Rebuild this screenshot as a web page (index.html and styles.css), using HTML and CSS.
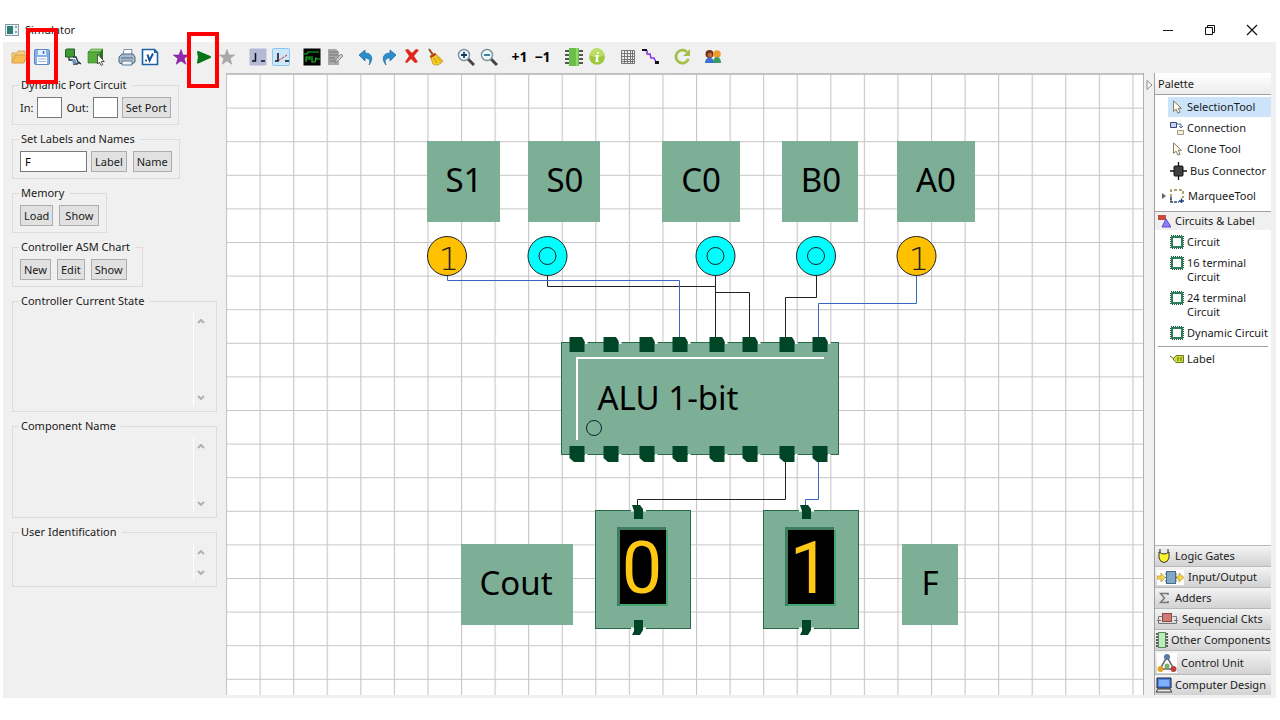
FILE: index.html
```html
<!DOCTYPE html>
<html lang="en">
<head>
<meta charset="utf-8">
<title>Simulator</title>
<link rel="stylesheet" href="styles.css">
</head>
<body>
<header class="titlebar">
  <svg class="app-icon" width="14" height="12" viewBox="0 0 14 12"><rect x=".5" y=".5" width="13" height="11" fill="#e8f4f8" stroke="#8a9aa5"/><rect x="2" y="2" width="6" height="8" fill="#2e7d78"/><path d="M10 3h2M10 8h2" stroke="#456"/></svg>
  <h1 class="title">Simulator</h1>
  <div class="window-controls">
    <button aria-label="Minimize"><svg width="12" height="12"><path d="M1 6.500h10" stroke="#111"/></svg></button>
    <button aria-label="Restore"><svg width="12" height="12" fill="none" stroke="#111"><path d="M1.500 3.500h7v7h-7zM3.500 3.500v-2h7v7h-2"/></svg></button>
    <button aria-label="Close"><svg width="12" height="12"><path d="M1 1l10 10M11 1L1 11" stroke="#111" stroke-width="1.200"/></svg></button>
  </div>
</header>

<div class="app">
  <div class="toolbar" role="toolbar" aria-label="Main">
    <div class="group">
      <button aria-label="Open"><svg viewBox="0 0 18 18"><path d="M2 15V5h5l1-2h7v3" fill="#f1cf85" stroke="#d9aa55"/><path d="M2 15l3-8h12l-3 8z" fill="#f4bd55" stroke="#dca040"/></svg></button>
      <button aria-label="Save"><svg viewBox="0 0 18 18"><rect x="1.500" y="1.500" width="15" height="15" rx="1.500" fill="#86b0e6" stroke="#5c88c6"/><rect x="5" y="2" width="8" height="5" fill="#e8f1fb"/><path d="M10.500 3v3" stroke="#3f6fb5" stroke-width="1.500"/><rect x="4" y="9" width="10" height="7" fill="#fff"/><path d="M5 11h8M5 13.500h8" stroke="#9db9dd"/></svg></button>
    </div>
    <div class="group">
      <button aria-label="Simulate circuit"><svg viewBox="0 0 18 18"><path d="M1.500 2l1-1h8v7l-1 1h-8z" fill="#3f9a34" stroke="#20601c"/><path d="M5 9v3h4M9 9h3l2 5 3 2M9 16h4l3-2" fill="none" stroke="#234" stroke-width="1.300"/><path d="M8 12l3-1 2 4-4 1z" fill="#6c93bd"/></svg></button>
      <button aria-label="Select component"><svg viewBox="0 0 18 18"><path d="M1 4l3-3h12l-3 3z" fill="#91d176" stroke="#3d8a2a" stroke-width=".6"/><path d="M1 4h12v11H1z" fill="#57ac3b" stroke="#2f7a1f" stroke-width=".6"/><path d="M13 4l3-3v11l-3 3z" fill="#2d7420"/><path d="M10.500 6v10l2-2 1.500 3.500 1.800-.8-1.500-3.200h3z" fill="#fff" stroke="#333" stroke-width=".8"/></svg></button>
    </div>
    <div class="group">
      <button aria-label="Print"><svg viewBox="0 0 18 18"><path d="M5 7l1-5.500h8L13.500 7z" fill="#fff" stroke="#7890a8"/><path d="M1 9l3-3h11l2 3v5l-2 1.500H2L1 14z" fill="#a9bbcd" stroke="#4d6781"/><path d="M4 13h10v4H4z" fill="#eef4fa" stroke="#5f7890"/><path d="M3 10h12" stroke="#506a84"/></svg></button>
      <button aria-label="Verilog"><svg viewBox="0 0 18 18"><path d="M1.500 1.500h12l3 3v12h-15z" fill="#fff" stroke="#1962a8" stroke-width="1.600"/><path d="M13 1l4 4h-4z" fill="#1962a8"/><path d="M6.500 6.500l2 6 3.500-7" fill="none" stroke="#10509a" stroke-width="2"/><circle cx="5" cy="12.500" r="1.100" fill="#10509a"/></svg></button>
    </div>
    <div class="group">
      <button aria-label="New wizard"><svg viewBox="0 0 18 18"><path d="M9 1.500l2 5.500h5.700l-4.500 3.600 1.600 5.700L9 13l-4.800 3.300 1.600-5.700L1.300 7H7z" fill="#9226ad" stroke="#6d1688" stroke-width=".5"/></svg></button>
      <button aria-label="Run"><svg viewBox="0 0 18 18"><path d="M3 4l12 5-12 5.500 1-5.500z" fill="#087514" stroke="#087514" stroke-width="2" stroke-linejoin="round"/></svg></button>
      <button aria-label="Stop"><svg viewBox="0 0 18 18"><path d="M9 1.500l2 5.500h5.700l-4.500 3.600 1.600 5.700L9 13l-4.800 3.300 1.600-5.700L1.300 7H7z" fill="#a9a9a9" stroke="#999" stroke-width=".5"/></svg></button>
    </div>
    <div class="group">
      <button aria-label="Straight wire"><svg viewBox="0 0 18 18"><rect x=".5" y=".5" width="17" height="17" rx="1" fill="#b6b9d6"/><path d="M6.500 5v8H3M12 13h4" fill="none" stroke="#111" stroke-width="1.500"/></svg></button>
      <button aria-label="Broken wire"><svg viewBox="0 0 18 18"><rect x=".5" y=".5" width="17" height="17" rx="1" fill="#cbe8fb" stroke="#8cc7ef"/><path d="M6 5v8H3M13 13h4" fill="none" stroke="#111" stroke-width="1.500"/><path d="M6 13l9-6" stroke="#d32222" stroke-dasharray="3 1"/></svg></button>
    </div>
    <div class="group">
      <button aria-label="Waveform"><svg viewBox="0 0 18 18"><path d="M.5.500h17v17H.5z" fill="#000"/><path d="M1 6h3l1-2h11M3 14V9h4v2H3M9 8v6h3l1-4 1 1h3" fill="none" stroke="#14bd28" stroke-width="1.200"/></svg></button>
      <button aria-label="Edit"><svg viewBox="0 0 18 18"><path d="M2 1h8l3 3v13H2z" fill="#a8a8a8"/><path d="M3 4h9M3 7h9M3 10h6M3 13h6" stroke="#777"/><path d="M9 15l1-4 5-5 2 2-5 5z" fill="#ccc" stroke="#888"/></svg></button>
    </div>
    <div class="group">
      <button aria-label="Undo"><svg viewBox="0 0 18 18"><path d="M2 7l6-5v3c7 0 9 6 4 12 2-5 0-7-4-7v3z" fill="#2a8dcc" stroke="#1b689e" stroke-width=".7"/></svg></button>
      <button aria-label="Redo"><svg viewBox="0 0 18 18"><path d="M16 7l-6-5v3C3 5 1 11 6 17c-2-5 0-7 4-7v3z" fill="#2a8dcc" stroke="#1b689e" stroke-width=".7"/></svg></button>
      <button aria-label="Delete"><svg viewBox="0 0 18 18"><path d="M2 2l3-1 4 4 4-4 3 1-5 6 4 6-3 1-4-4-4 4-2-1 4-6z" fill="#e12620"/></svg></button>
      <button aria-label="Clear"><svg viewBox="0 0 18 18"><path d="M3 1l4 6" stroke="#8e4b1a" stroke-width="2"/><path d="M4 8l5-3 3 3 5 5c-3 4-7 5-10 3z" fill="#f3cb28" stroke="#b98b18" stroke-width=".7"/><path d="M4 8l5-3 1 2-5 3z" fill="#b63a1f"/><path d="M8 10l3 5M11 9l4 5" stroke="#c99b17"/></svg></button>
    </div>
    <div class="group">
      <button aria-label="Zoom in"><svg viewBox="0 0 18 18"><path d="M11 11l6 6" stroke="#444" stroke-width="3"/><circle cx="7" cy="7" r="5.500" fill="#edf8fa" stroke="#78909b" stroke-width="1.400"/><path d="M4 7h6M7 4v6" stroke="#173f5a" stroke-width="1.800"/></svg></button>
      <button aria-label="Zoom out"><svg viewBox="0 0 18 18"><path d="M11 11l6 6" stroke="#444" stroke-width="3"/><circle cx="7" cy="7" r="5.500" fill="#edf8fa" stroke="#78909b" stroke-width="1.400"/><path d="M4 7h6" stroke="#27768f" stroke-width="1.800"/></svg></button>
    </div>
    <div class="group">
      <button class="step">+1</button>
      <button class="step">−1</button>
    </div>
    <div class="group">
      <button aria-label="Chip"><svg viewBox="0 0 18 18"><path d="M0 3h18M0 7h18M0 11h18M0 15h18" stroke="#222" stroke-width="1.300"/><rect x="4" y="0" width="10" height="18" fill="#6bc04a"/><path d="M11 0h2v18h-2z" fill="#8cd86a"/></svg></button>
      <button aria-label="Information"><svg viewBox="0 0 18 18"><circle cx="9" cy="9" r="7.800" fill="#9bc93b"/><path d="M2 7a7 7 0 0 1 14 0c-4 3-10 3-14 0z" fill="#bade67"/><path d="M10 4v1.500M7.500 8H9.500l-1 5h2" fill="none" stroke="#fff" stroke-width="2"/></svg></button>
    </div>
    <div class="group">
      <button aria-label="Grid"><svg viewBox="0 0 18 18"><path d="M2.500 2.500h13v13h-13zM5.500 2v14M8.500 2v14M11.500 2v14M13.500 2v14M2 5.500h14M2 8.500h14M2 11.500h14M2 13.500h14" fill="none" stroke="#777"/></svg></button>
      <button aria-label="Connect"><svg viewBox="0 0 18 18"><path d="M3 2l2 1v3h3l1 4h3l2 4" fill="none" stroke="#8030e8" stroke-width="1.500"/><path d="M0 1h5v2H0zM13 13h4v3h-4z" fill="#151020"/></svg></button>
    </div>
    <div class="group"><button aria-label="Refresh"><svg viewBox="0 0 18 18"><path d="M14 4a6.500 6.500 0 1 0 1.500 7" fill="none" stroke="#a3bf4b" stroke-width="2.800"/><path d="M17 1v7h-7z" fill="#a3bf4b"/></svg></button></div>
    <div class="group"><button aria-label="Users"><svg viewBox="0 0 18 18"><circle cx="5.500" cy="6" r="4" fill="#71331d"/><circle cx="6" cy="7" r="2.300" fill="#c76936"/><circle cx="13" cy="6" r="3.800" fill="#ed9b31"/><path d="M9 15c0-8 8-8 8 0z" fill="#3a9b60"/><path d="M1 15c0-7 9-7 9 0z" fill="#3973cf"/></svg></button></div>
  </div>

  <main class="workspace">
    <aside class="side">
      <fieldset><legend>Dynamic Port Circuit</legend>
        <div class="row">
          <label for="in">In:</label><input id="in" class="port" type="text">
          <label for="out">Out:</label><input id="out" class="port" type="text">
          <button>Set Port</button>
        </div>
      </fieldset>
      <fieldset><legend>Set Labels and Names</legend>
        <div class="row"><input class="name" type="text" value="F" aria-label="Label or name"><button>Label</button><button>Name</button></div>
      </fieldset>
      <fieldset><legend>Memory</legend>
        <div class="row"><button>Load</button><button class="show">Show</button></div>
      </fieldset>
      <fieldset><legend>Controller ASM Chart</legend>
        <div class="row"><button>New</button><button>Edit</button><button>Show</button></div>
      </fieldset>
      <fieldset class="pane"><legend>Controller Current State</legend>
        <div class="scroll state"><svg width="8" height="5"><path d="M1 4l3-3 3 3"/></svg><svg width="8" height="5"><path d="M1 1l3 3 3-3"/></svg></div>
      </fieldset>
      <fieldset class="pane"><legend>Component Name</legend>
        <div class="scroll component"><svg width="8" height="5"><path d="M1 4l3-3 3 3"/></svg><svg width="8" height="5"><path d="M1 1l3 3 3-3"/></svg></div>
      </fieldset>
      <fieldset class="pane"><legend>User Identification</legend>
        <div class="scroll user"><svg width="8" height="5"><path d="M1 4l3-3 3 3"/></svg><svg width="8" height="5"><path d="M1 1l3 3 3-3"/></svg></div>
      </fieldset>
    </aside>

    <div class="canvas">
      <svg class="scene" width="100%" height="100%">
        <defs>
          <pattern id="grid" width="33.570" height="33.600" patternUnits="userSpaceOnUse"><path d="M.5 0V34M0 .5H34" stroke="#c6c6c6" stroke-width="1.200"/></pattern>
          <g id="pin-top"><path d="M8 5h2.500v2H8z" fill="#fff"/><path d="M-7.500 0H5L7.500 4V15h-15z" fill="#004526"/></g>
          <g id="pin-bottom"><path d="M8 8h2.500v2H8z" fill="#fff"/><path d="M-7.500 0h15v16H-3l-4.500-4z" fill="#004526"/></g>
          <g id="display">
            <rect x=".5" y="5.500" width="95" height="118" fill="#7dae96" stroke="#276b4b"/>
            <path d="M36 4.500h15v2H36zM36 122.500h15v2H36z" fill="#fff"/>
            <path d="M37 0h8l3 4v10h-9V6zM39 115h9v10l-3 5h-8l2-4z" fill="#004526"/>
            <path d="M22 22h49v79H22z" fill="#3f7d60"/><path d="M25 25h48v76H25z" fill="#45a873"/><path d="M25 25h46v74H25z"/>
          </g>
        </defs>
        <rect width="100%" height="100%" fill="#fff"/>
        <rect width="100%" height="100%" fill="url(#grid)"/>
        <g transform="translate(-226 -74)">
          <g fill="#7dae96">
            <rect x="427" y="141" width="73" height="81"/><rect x="528" y="141" width="72" height="81"/>
            <rect x="662" y="141" width="78" height="81"/><rect x="782" y="141" width="76" height="81"/>
            <rect x="897" y="141" width="78" height="81"/><rect x="461" y="544" width="112" height="81"/>
            <rect x="902" y="544" width="56" height="81"/>
          </g>
          <g fill="none" stroke="#222">
            <path d="M547.500 275v11.500h168M715.500 275v63M715.500 292.500h34v46M816.500 275v22.500h-31v41M785.500 461v38.500h-148v8"/>
            <path d="M447.500 275v5.500h232v58M916.500 275v28.500h-98v35M818.500 461v38.500h-13v8" stroke="#3568c0"/>
          </g>
          <g stroke="#222">
            <circle cx="447" cy="256" r="19.500" fill="#ffc000"/><circle cx="916.500" cy="256" r="19.500" fill="#ffc000"/>
            <g fill="#0ff"><circle cx="547.500" cy="256" r="19.500"/><circle cx="547.500" cy="256" r="8.500"/><circle cx="715.500" cy="256" r="19.500"/><circle cx="715.500" cy="256" r="8.500"/><circle cx="816" cy="256" r="19.500"/><circle cx="816" cy="256" r="8.500"/></g>
          </g>
          <g class="bit"><text x="449" y="270">1</text><text x="919" y="270">1</text></g>
          <rect x="561.500" y="342.500" width="277" height="112" fill="#7dae96" stroke="#276b4b"/>
          <path d="M577 440V358H824" fill="none" stroke="#fff" stroke-width="2"/>
          <circle cx="594" cy="428" r="7.500" fill="none" stroke="#123"/>
          <use href="#pin-top" x="577" y="337"/><use href="#pin-top" x="611" y="337"/><use href="#pin-top" x="647" y="337"/><use href="#pin-top" x="680" y="337"/><use href="#pin-top" x="717" y="337"/><use href="#pin-top" x="750" y="337"/><use href="#pin-top" x="787" y="337"/><use href="#pin-top" x="820" y="337"/>
          <use href="#pin-bottom" x="577" y="446"/><use href="#pin-bottom" x="611" y="446"/><use href="#pin-bottom" x="647" y="446"/><use href="#pin-bottom" x="680" y="446"/><use href="#pin-bottom" x="717" y="446"/><use href="#pin-bottom" x="750" y="446"/><use href="#pin-bottom" x="787" y="446"/><use href="#pin-bottom" x="820" y="446"/>
          <use href="#display" x="595" y="505"/><use href="#display" x="763" y="505"/>
          <g class="tag">
            <text x="464" y="192">S1</text><text x="565" y="192">S0</text><text x="701" y="192">C0</text><text x="821" y="192">B0</text><text x="936" y="192">A0</text>
            <text x="516" y="595">Cout</text><text x="930" y="595">F</text><text x="668" y="410">ALU 1-bit</text>
          </g>
          <g class="digit"><text x="642" y="593">0</text><text x="810" y="593">1</text></g>
        </g>
      </svg>
    </div>

    <button class="flyout" aria-label="Collapse palette"><svg width="7" height="10"><path d="M1 .5l5 4.500-5 4.500z" fill="#fff" stroke="#888"/></svg></button>

    <aside class="palette">
      <svg width="0" height="0" class="defs"><defs>
        <symbol id="arrow" viewBox="0 0 12 16"><path d="M2 1v12l3-2.500 2 4.500 2.500-1-2-4.500h3.500z" fill="#fffbe6" stroke="#6e6a5c"/></symbol>
        <symbol id="board" viewBox="0 0 14 14"><rect x="1" y="1" width="12" height="12" fill="none" stroke="#1d5b40" stroke-width="2" stroke-dasharray="1 1"/><rect x="2" y="2" width="10" height="10" fill="#fff" stroke="#2d7d5b" stroke-width="2"/></symbol>
      </defs></svg>
      <h2 class="head">Palette</h2>
      <div class="tools">
        <button class="tool selected"><svg><use href="#arrow"/></svg>SelectionTool</button>
        <button class="tool"><svg viewBox="0 0 14 14"><path d="M.5 1.500h6v5h-6z" fill="#c7d3ef" stroke="#34467f"/><path d="M7 3h4v4M9 5l2 2 2-2" fill="none" stroke="#536fa0"/><path d="M7.500 9.500h6v4h-6z" fill="#f3efd9" stroke="#a09d88"/></svg>Connection</button>
        <button class="tool"><svg><use href="#arrow"/></svg>Clone Tool</button>
        <button class="tool wide"><svg viewBox="0 0 17 18"><path d="M8.500 0v18M0 9h17" stroke="#111" stroke-width="1.300"/><rect x="4" y="4" width="9" height="10" rx="1" fill="#3f3f3f" stroke="#111"/></svg>Bus Connector</button>
        <button class="tool marquee"><svg class="tri" viewBox="0 0 4 6"><path d="M0 0l4 3-4 3z" fill="#666"/></svg><svg viewBox="0 0 14 14"><path d="M1 13V1h12v8" fill="none" stroke="#9b8446" stroke-width="1.500" stroke-dasharray="3 2"/><path d="M1 8v5h8" fill="none" stroke="#2c4270" stroke-width="1.500" stroke-dasharray="3 1"/><path d="M9 12h5M11.500 9.500v5" stroke="#1d3b84" stroke-width="1.500"/></svg>MarqueeTool</button>
      </div>
      <h3 class="drawer open"><svg width="13" height="13"><path d="M0 0h8v5H0z" fill="#c94a3c"/><path d="M8 4l5 8H4z" fill="#8b80f5" stroke="#5a4bd0"/></svg>Circuits &amp; Label</h3>
      <div class="items">
        <button class="tool"><svg><use href="#board"/></svg>Circuit</button>
        <button class="tool two"><svg><use href="#board"/></svg><span>16 terminal<br>Circuit</span></button>
        <button class="tool two"><svg><use href="#board"/></svg><span>24 terminal<br>Circuit</span></button>
        <button class="tool"><svg><use href="#board"/></svg>Dynamic Circuit</button>
        <hr>
        <button class="tool"><svg viewBox="0 0 14 14"><path d="M0 4l4 3" stroke="#555"/><path d="M3 7l3-3.500h7.500v7H6z" fill="#cfe03c" stroke="#6b7420"/><path d="M7 6h5M7 8h5" stroke="#55611b" stroke-dasharray="2 1"/></svg>Label</button>
      </div>
      <div class="drawers">
        <button class="drawer"><svg width="14" height="14"><path d="M3 0v4M11 0v4" stroke="#222"/><path d="M2 3q5 4 10 0v6q-1 4-5 4.500Q3 13 2 9z" fill="#fbf32a" stroke="#333"/></svg>Logic Gates</button>
        <button class="drawer"><svg width="27" height="15"><path d="M0 0h27v15H0z" fill="#fff"/><path d="M0 6h4V3l4 4.500L4 12V9H0zM19 6h3V3l5 4.500-5 4.500V9h-3z" fill="#f7d64a" stroke="#a8842a" stroke-width=".6"/><rect x="9.500" y="1.500" width="9" height="12" fill="#7fa9c4" stroke="#446a85"/><path d="M8 4h2M8 7.500h2M8 11h2M18 4h2M18 7.500h2M18 11h2" stroke="#446a85"/></svg>Input/Output</button>
        <button class="drawer"><svg width="14" height="14"><path d="M11 4V2.500H3.500L7.500 7l-4 4.500H11V10" fill="none" stroke="#777" stroke-width="1.500"/></svg>Adders</button>
        <button class="drawer"><svg width="21" height="14"><path d="M5 4.500H1.500v7h18v-7h-4M0 8.500h4M17 8.500h4" fill="none" stroke="#777"/><rect x="5.500" y="1.500" width="9" height="8" fill="#cf7b75" stroke="#8e4743"/></svg>Sequencial Ckts</button>
        <button class="drawer other"><svg width="12" height="16"><path d="M0 2h12M0 5h12M0 8h12M0 11h12M0 14h12" stroke="#333" stroke-width="1.500"/><rect x="2.500" y=".5" width="7" height="15" fill="#bdebc0" stroke="#568c59"/></svg>Other Components</button>
        <button class="drawer tall"><svg width="20" height="20"><path d="M0 0h20v20H0z" fill="#fff"/><path d="M10 4L3 16h14z" fill="none" stroke="#666" stroke-width="1.500"/><circle cx="10" cy="4" r="3" fill="#5a7ba2"/><circle cx="3.500" cy="16" r="3" fill="#e2a22a"/><circle cx="16.500" cy="16" r="3" fill="#b94343"/><circle cx="10" cy="13" r="2.500" fill="#75b468"/></svg>Control Unit</button>
        <button class="drawer other"><svg width="16" height="16"><path d="M1 1h14v10H1z" fill="#4f82e8" stroke="#222"/><path d="M3 3h10v6H3z" fill="#7db0ff"/><path d="M2 12h12l2 3H0z" fill="#eee" stroke="#333"/></svg>Computer Design</button>
      </div>
    </aside>
  </main>
</div>

<div class="highlight save" aria-hidden="true"></div>
<div class="highlight run" aria-hidden="true"></div>
</body>
</html>
```
FILE: styles.css
```css
* { box-sizing: border-box; }
body {
  margin: 0;
  padding: 20px 4px 22px 3px;
  height: 100vh;
  display: flex;
  flex-direction: column;
  background: #fff;
  color: #1a1a1a;
  font: 11px/14px "Noto Sans", "Open Sans", sans-serif;
}
button {
  font: inherit;
  color: inherit;
  border: 0;
  padding: 0;
  background: none;
  display: flex;
  align-items: center;
  justify-content: center;
  white-space: nowrap;
}
h1, h2, h3 { margin: 0; font: inherit; }

.titlebar { height: 22px; display: flex; align-items: center; padding: 0 3px 2px 2px; gap: 6px; }
.title { flex: 1; }
.window-controls { display: flex; }
.window-controls button { width: 42px; height: 20px; }

.app { flex: 1; min-height: 0; display: flex; flex-direction: column; background: #f0f0f0; }
.toolbar { height: 31px; display: flex; align-items: center; gap: 8px; padding: 0 0 1px 4px; }
.group { display: flex; }
.group button { width: 23px; height: 22px; }
.group svg { width: 18px; height: 18px; }
.group .step { font-size: 14px; font-weight: 700; color: #000; }

.workspace { flex: 1; min-height: 0; display: flex; padding: 0 5px 3px 0; }

.side {
  width: 223px;
  padding: 4px 9px;
  display: flex;
  flex-direction: column;
  align-items: flex-start;
  gap: 6px;
}
fieldset {
  margin: 0;
  min-width: 0;
  height: 48px;
  padding: 4px 7px 6px;
  border: 1px solid #dcdcdc;
}
legend { padding: 0 5px 0 2px; line-height: 16px; margin-left: -1px; }
.row { display: flex; align-items: center; gap: 4px; }
.row button { height: 21px; padding: 0 3px; background: #e1e1e1; border: 1px solid #adadad; }
.row button + button { margin-left: 2px; }
.row .show { padding: 0 5px; }
.row input {
  height: 21px;
  padding: 0 4px;
  border: 1px solid #7a7a7a;
  background: #fff;
  font: inherit;
}
.row .port { width: 25px; }
.row .name { width: 67px; }
.side .pane { width: 205px; height: auto; padding: 4px 7px 5px; }
.scroll {
  width: 16px;
  margin-left: auto;
  padding: 6px 0 6px 3px;
  border-left: 1px solid #fff;
  display: flex;
  flex-direction: column;
  justify-content: space-between;
}
.state { height: 93px; }
.component { height: 74px; }
.user { height: 37px; }
.scroll path { fill: none; stroke: #b0b0b0; stroke-width: 2; }

.canvas { flex: 1; min-width: 0; overflow: hidden; border-top: 1px solid #c0c0c0; }
.scene { display: block; }
.tag { font-family: "Noto Sans", sans-serif; font-size: 33px; text-anchor: middle; fill: #000; }
.digit { font-family: Roboto, sans-serif; font-size: 72px; text-anchor: middle; fill: #ffc814; }
.bit { font-family: "DejaVu Sans", sans-serif; font-weight: 200; font-size: 32px; text-anchor: middle; fill: #222; }

.flyout {
  width: 12px;
  padding-top: 7px;
  align-items: flex-start;
  border-left: 1px solid #b0b0b0;
  border-right: 1px solid #a0a0a0;
}
.palette { width: 116px; display: flex; flex-direction: column; background: #fff; }
.defs { position: absolute; }
.head { height: 22px; padding: 4px 3px; background: linear-gradient(#fff, #ececec); border-bottom: 1px solid #a0a0a0; }
.tools { padding: 2px 0 2px 13px; display: flex; flex-direction: column; gap: 1px; border-bottom: 1px solid #a0a0a0; }
.tool { width: 100%; height: 20px; padding-left: 2px; gap: 3px; justify-content: flex-start; text-align: left; }
.tool svg { width: 14px; height: 14px; flex: none; }
.selected { background: #cce4fa; }
.wide { height: 22px; }
.wide svg { width: 17px; height: 18px; }
.tools .marquee { height: 26px; width: auto; margin-left: -6px; padding: 0; gap: 4px; }
.marquee .tri { width: 4px; height: 6px; }
.open { background: #f0f0f0; }
.palette .open { height: 18px; }
.items { padding: 2px 0 0 13px; display: flex; flex-direction: column; gap: 1px; }
.two { height: 34px; align-items: flex-start; padding-top: 3px; }
hr { width: 110px; margin: 2px 0 1px -10px; border: 0; border-top: 1px solid #a0a0a0; }
.drawers { margin-top: auto; }
.drawer { width: 100%; height: 20px; padding-left: 3px; gap: 4px; display: flex; align-items: center; justify-content: flex-start; }
.drawers .drawer {
  height: 21px;
  padding-left: 2px;
  border-top: 1px solid #b8b8b8;
  background: linear-gradient(#f4f4f4, #d2d2d2);
}
.drawers .tall { height: 24px; }
.drawers .other { padding-left: 1px; gap: 3px; }

.highlight { position: absolute; width: 32px; height: 56px; border: 4px solid #f00; }
.save { left: 26px; top: 28px; }
.run { left: 187px; top: 32px; }
```
